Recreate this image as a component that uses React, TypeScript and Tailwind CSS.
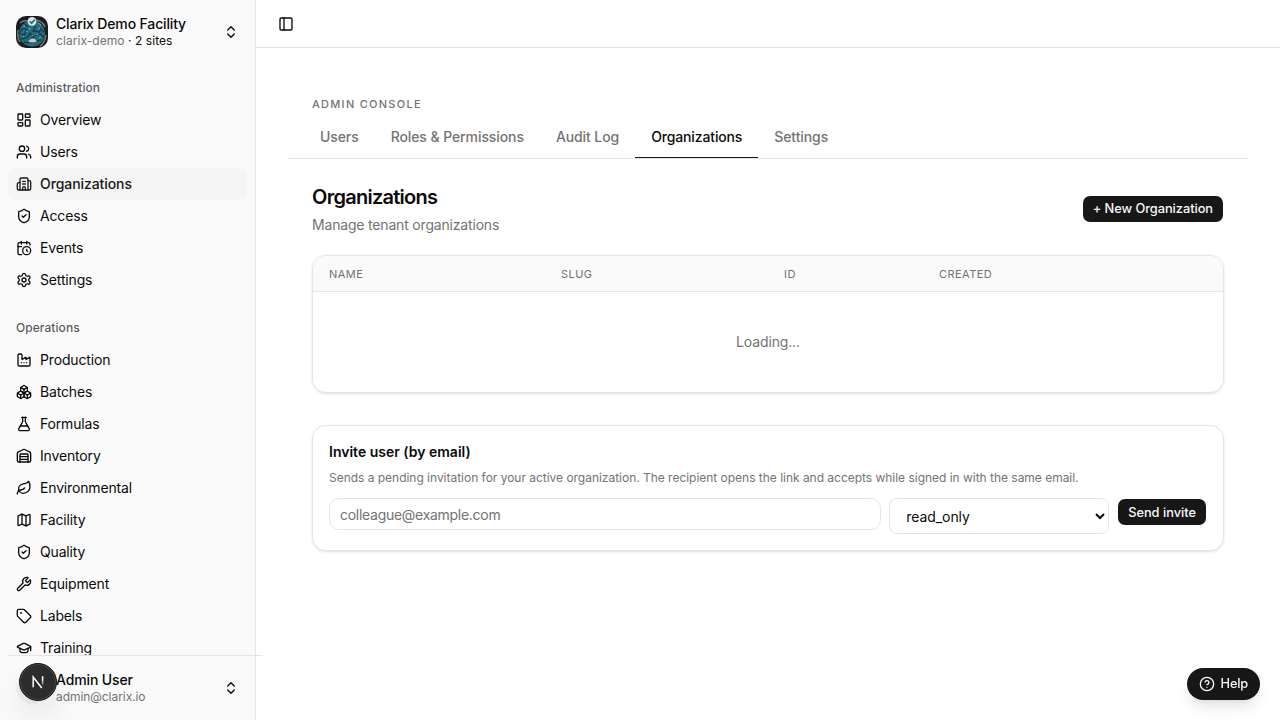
import {
  Boxes,
  Building2,
  CalendarClock,
  ChevronsUpDown,
  CircleHelp,
  Factory,
  FlaskConical,
  GraduationCap,
  LayoutDashboard,
  Leaf,
  type LucideIcon,
  Map,
  PanelLeft,
  Settings,
  ShieldCheck,
  Tag,
  Users,
  Warehouse,
  Wrench,
} from "lucide-react";

type NavItem = { title: string; icon: LucideIcon; active?: boolean };

const groups: { label: string; items: NavItem[] }[] = [
  {
    label: "Administration",
    items: [
      { title: "Overview", icon: LayoutDashboard },
      { title: "Users", icon: Users },
      { title: "Organizations", icon: Building2, active: true },
      { title: "Access", icon: ShieldCheck },
      { title: "Events", icon: CalendarClock },
      { title: "Settings", icon: Settings },
    ],
  },
  {
    label: "Operations",
    items: [
      { title: "Production", icon: Factory },
      { title: "Batches", icon: Boxes },
      { title: "Formulas", icon: FlaskConical },
      { title: "Inventory", icon: Warehouse },
      { title: "Environmental", icon: Leaf },
      { title: "Facility", icon: Map },
      { title: "Quality", icon: ShieldCheck },
      { title: "Equipment", icon: Wrench },
      { title: "Labels", icon: Tag },
      { title: "Training", icon: GraduationCap },
    ],
  },
];

const tabs = ["Users", "Roles & Permissions", "Audit Log", "Organizations", "Settings"];

const columns = ["Name", "Slug", "ID", "Created"];

function FacilityLogo() {
  return (
    <svg viewBox="0 0 32 32" className="size-8 shrink-0 rounded-[10px]">
      <rect width="32" height="32" fill="#1b1c1e" />
      <path d="M4 7Q9 3 13 6M19 4Q27 5 29 11M2 14Q1 22 4 26M30 19Q29 27 24 30" stroke="#77787a" strokeWidth="1.5" fill="none" />
      <circle cx="16" cy="17.5" r="13" fill="#226d80" />
      <path d="M3 17l4-5 4 2-3 5zM9 8l3 3M20 10l-3 5 6 1 3-4M5 23l6-1 3-5 4 4-5 3M19 20l5-2 4 3M8 26l5 1M21 25l4-1M26 14l2 2" stroke="#163c48" strokeWidth="1.3" fill="none" />
      <path d="M7 11l2-1M10 15l2 1M14 12l-1 2M20 18l2 1M7 20l1 1M23 22l2-1M22 13l2-1M16 20l1-1M22 7l3 2" stroke="#8ba5ab" strokeWidth="1" />
      <path d="M12.5 25.5q1-3 4-3t4 3q-4 1.5-8 0z" fill="#c3cccd" />
      <circle cx="16" cy="5.3" r="4.4" fill="#dfe5e5" />
      <path d="M13.8 5.3l1.8 2 3.2-3.7" stroke="#226d80" strokeWidth="1.7" fill="none" />
    </svg>
  );
}

function AppSidebar() {
  return (
    <aside className="flex w-64 shrink-0 flex-col border-r border-[#e5e5e5] bg-[#fafafa]">
      <div className="p-2">
        <button className="flex h-12 w-full items-center gap-2 p-2 text-left">
          <FacilityLogo />
          <span className="grid flex-1 text-sm leading-[17.5px]">
            <span className="font-medium tracking-[-0.15px]">Clarix Demo Facility</span>
            <span className="text-xs leading-4 tracking-[0.06px]">
              <span className="text-[#737373]">clarix-demo</span> · 2 sites
            </span>
          </span>
          <ChevronsUpDown className="size-4" />
        </button>
      </div>
      <nav className="min-h-0 flex-1 overflow-hidden">
        {groups.map((group) => (
          <div key={group.label} className="p-2">
            <div className="flex h-8 items-center px-2 text-xs font-medium tracking-[0.06px] text-[#0a0a0a]/70">
              {group.label}
            </div>
            <ul>
              {group.items.map(({ title, icon: Icon, active }) => (
                <li
                  key={title}
                  className={
                    active
                      ? "flex h-8 items-center gap-2 rounded-lg bg-[#f5f5f5] px-2 text-sm font-medium tracking-[-0.08px] text-[#171717]"
                      : "flex h-8 items-center gap-2 rounded-lg px-2 text-sm tracking-[-0.16px]"
                  }
                >
                  <Icon className="size-4 shrink-0" />
                  {title}
                </li>
              ))}
            </ul>
          </div>
        ))}
      </nav>
      <div className="relative">
        <div className="relative z-10 ml-2 h-px w-[255px] bg-[#e5e5e5]" />
        <div className="p-2">
          <button className="flex h-12 w-full items-center gap-2 p-2 text-left">
            <span className="size-8 rounded-full bg-[#f0f0f0]" />
            <span className="grid flex-1 text-sm leading-[17.5px]">
              <span className="font-medium tracking-[-0.13px]">Admin User</span>
              <span className="text-xs leading-4 tracking-[-0.06px] text-[#737373]">admin@clarix.io</span>
            </span>
            <ChevronsUpDown className="size-4" />
          </button>
        </div>
        <DevBadge />
      </div>
    </aside>
  );
}

function DevBadge() {
  return (
    <div className="absolute left-[19px] top-2 flex size-[38px] items-center justify-center rounded-full border border-[#171717] bg-[#2b2c2d] shadow-[inset_0_0_0_1px_#484848,0_16px_32px_-8px_rgba(0,0,0,0.24)]">
      <svg viewBox="0 0 14 14" className="size-[14px]" fill="none" strokeWidth="1.5">
        <defs>
          <linearGradient id="stem" x1="0" y1="1" x2="0" y2="13" gradientUnits="userSpaceOnUse">
            <stop offset="0.3" stopColor="white" />
            <stop offset="0.9" stopColor="white" stopOpacity="0" />
          </linearGradient>
        </defs>
        <path d="M2.2 12.2V2L10.8 13" stroke="white" />
        <path d="M11.6 1.2V10" stroke="url(#stem)" />
      </svg>
    </div>
  );
}

function OrganizationsTable() {
  return (
    <div className="overflow-hidden rounded-[14px] border border-[#e5e5e5] shadow-sm">
      <table className="w-full table-fixed text-left">
        <colgroup>
          <col className="w-[232px]" />
          <col className="w-[223px]" />
          <col className="w-[155px]" />
          <col />
        </colgroup>
        <thead className="bg-[#fafafa]">
          <tr className="text-[11px] uppercase tracking-[0.45px] text-[#737373]">
            {columns.map((column) => (
              <th key={column} className="p-0 font-normal">
                <div className="flex h-9 items-center border-b border-[#e5e5e5] px-4 pt-0.5">{column}</div>
              </th>
            ))}
          </tr>
        </thead>
        <tbody>
          <tr>
            <td colSpan={4} className="h-[100px] text-center text-sm tracking-[-0.14px] text-[#737373]">
              Loading...
            </td>
          </tr>
        </tbody>
      </table>
    </div>
  );
}

function InviteCard() {
  return (
    <section className="mt-8 h-[126px] rounded-[14px] border border-[#e5e5e5] p-4 shadow-sm">
      <h2 className="text-sm font-semibold">Invite user (by email)</h2>
      <p className="mt-2 text-xs tracking-[-0.022px] text-[#737373]">
        Sends a pending invitation for your active organization. The recipient opens the link and accepts while signed in
        with the same email.
      </p>
      <div className="mt-3 flex items-start gap-2">
        <input
          placeholder="colleague@example.com"
          className="h-8 min-w-0 flex-1 rounded-[10px] border border-[#e5e5e5] px-2.5 text-sm tracking-[-0.28px] placeholder:text-[#737373]"
        />
        <select className="h-9 w-[220px] rounded-lg border border-[#e5e5e5] bg-white px-3 text-sm tracking-[-0.05px]">
          <option>read_only</option>
        </select>
        <button className="h-7 rounded-lg border border-transparent bg-[#171717] bg-clip-padding px-2.5 pt-px text-[12.8px] font-medium text-[#fafafa]">
          Send invite
        </button>
      </div>
    </section>
  );
}

export default function App() {
  return (
    <div className="flex h-screen overflow-hidden bg-white font-[Inter,sans-serif] text-[#0a0a0a] antialiased">
      <AppSidebar />
      <div className="flex min-w-0 flex-1 flex-col">
        <header className="flex h-12 items-center border-b border-[#e5e5e5] px-[22px]">
          <PanelLeft className="size-4" />
        </header>
        <main className="px-8 pt-12">
          <p className="px-6 text-[11px] font-medium uppercase leading-4 tracking-[1.28px] text-[#737373]">
            Admin Console
          </p>
          <div className="mt-1 flex h-[43px] border-b border-[#e5e5e5] px-4">
            {tabs.map((tab) => (
              <a
                key={tab}
                className={
                  tab === "Organizations"
                    ? "border-b border-[#171717] px-4 pt-[11px] text-sm font-medium tracking-[-0.14px]"
                    : "px-4 pt-[11px] text-sm font-medium tracking-[-0.09px] text-[#737373]"
                }
              >
                {tab}
              </a>
            ))}
          </div>
          <div className="px-6 pt-6">
            <div className="mb-5 flex items-center justify-between">
              <div>
                <h1 className="text-xl font-semibold tracking-[-0.74px]">Organizations</h1>
                <p className="mt-1 text-sm tracking-[-0.18px] text-[#737373]">Manage tenant organizations</p>
              </div>
              <button className="h-7 rounded-lg border border-transparent bg-[#171717] bg-clip-padding px-2.5 text-[12.8px] font-medium tracking-[-0.04px] text-[#fafafa]">
                + New Organization
              </button>
            </div>
            <OrganizationsTable />
            <InviteCard />
          </div>
        </main>
      </div>
      <button className="fixed bottom-5 right-5 flex h-8 items-center gap-1.5 rounded-full bg-[#171717] px-3 text-[12.8px] font-medium tracking-[-0.2px] text-[#fafafa] shadow-lg">
        <CircleHelp className="size-4" />
        Help
      </button>
    </div>
  );
}
